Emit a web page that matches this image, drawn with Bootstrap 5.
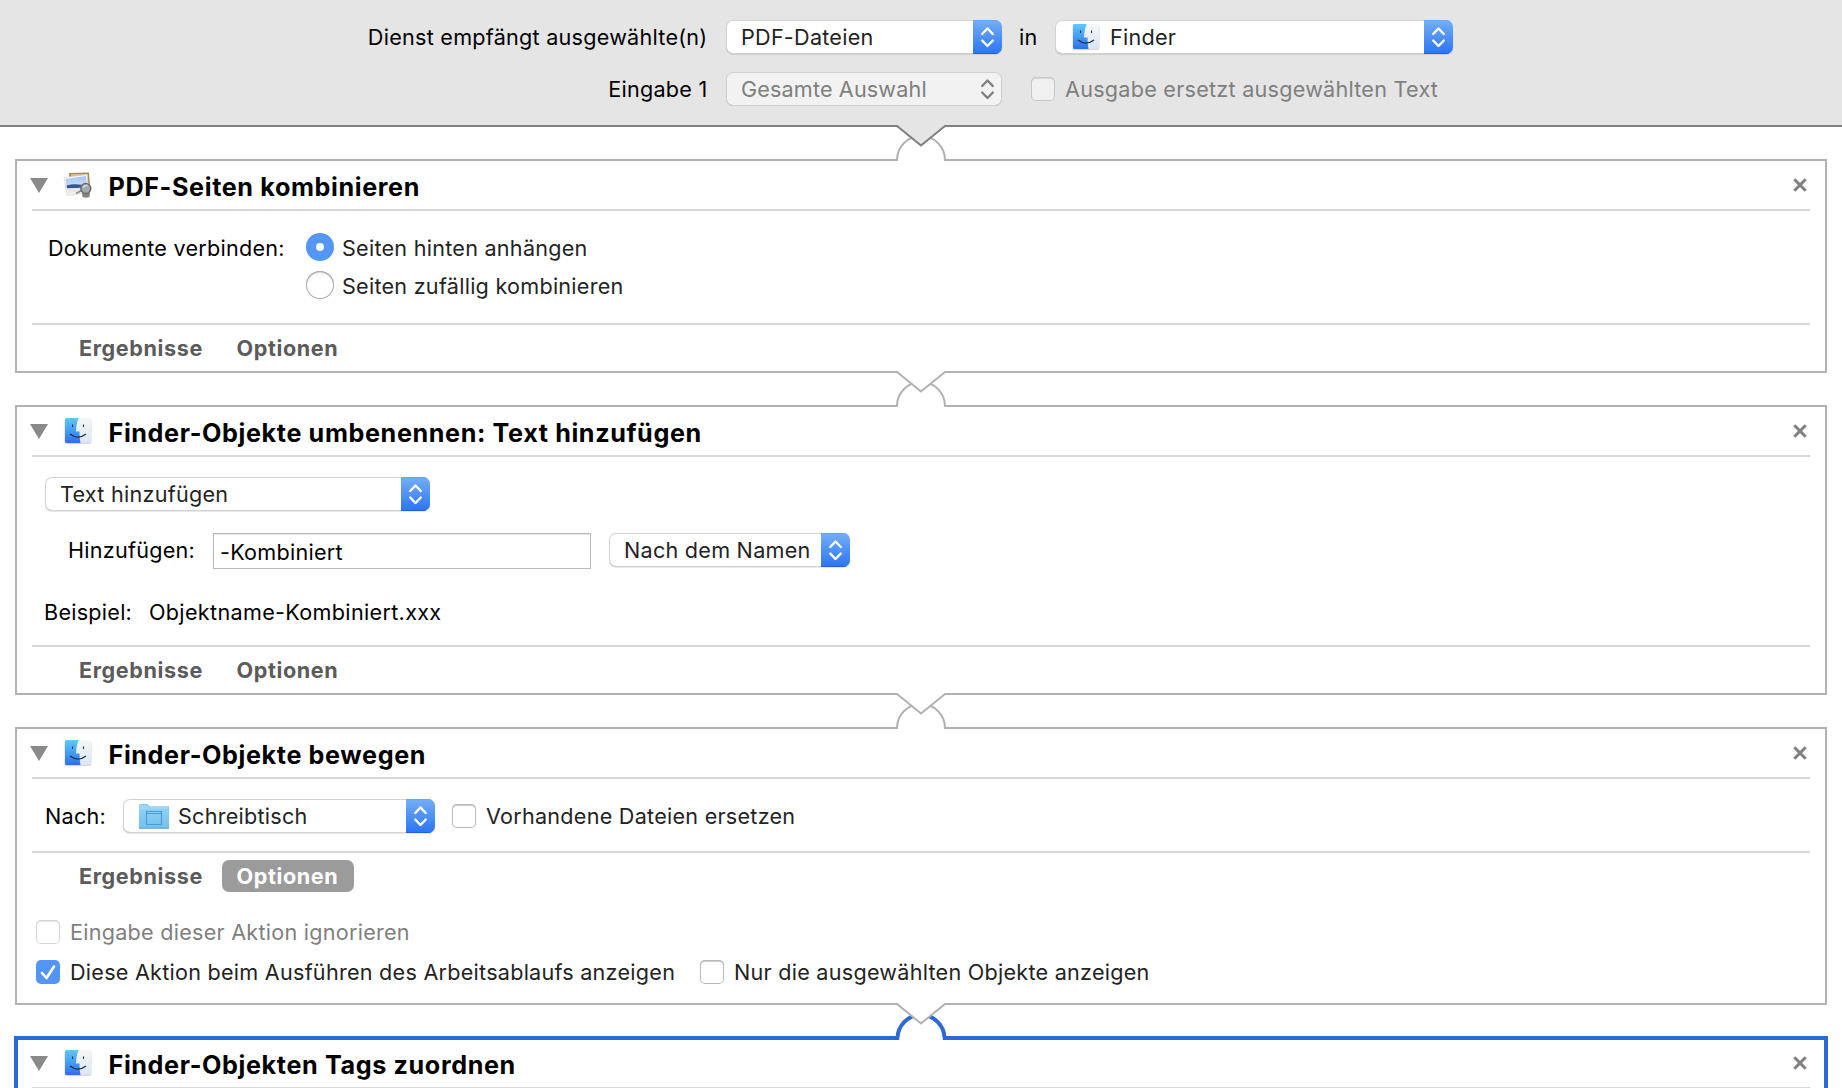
<!DOCTYPE html>
<html lang="de">
<head>
<meta charset="utf-8">
<title>Automator</title>
<link href="https://cdn.jsdelivr.net/npm/bootstrap@5.3.0/dist/css/bootstrap.min.css" rel="stylesheet">
<style>
body{font-family:Inter,"Noto Sans",sans-serif;font-size:21.6px;letter-spacing:.25px;line-height:26px;color:#000;background:#fff;height:1088px;overflow:hidden}
.t{white-space:nowrap;flex:none}
.svc{background:#e5e5e5;height:127px;border-bottom:2px solid #7f7f7f;padding-top:20px}
.svc-row{height:34px;margin-bottom:18px}
.svc-label{width:707.500px;margin-right:18.500px;text-align:right}
.pop{height:34px;flex:none;background:#fff;border-radius:7px;box-shadow:inset 0 0 0 1px #d2d2d2,inset 0 -1px 0 #b4b4b4,0 1px 1px rgba(0,0,0,.1);color:#232323;overflow:hidden;padding-left:15px}
.pop svg.pic{margin-left:1px}
.pop .cap{width:29px;height:34px;background:linear-gradient(#74aff6,#2b74f5);box-shadow:inset 0 -1px 0 #1b62e6,inset 0 1px 0 #6aa5f0}
.pop.off{background:#f2f2f2;color:#7f7f7f;letter-spacing:.15px;box-shadow:inset 0 0 0 1px #d0d0d0,inset 0 -1px 0 #c2c2c2}
.pop.off .cap{background:none;box-shadow:none}
.tick{width:24px;height:24px;border-radius:5px;flex:none;background:#fff;box-shadow:inset 0 0 0 1px #b9b9b9,inset 0 2px 1px #c9c9c9;margin-right:10px}
.tick.dim{box-shadow:inset 0 0 0 1px #d4d4d4,inset 0 2px 1px #e4e4e4}
.svc .tick.dim{background:#f0f0f0;margin-left:29px;box-shadow:inset 0 0 0 1px #c6c6c6,inset 0 2px 1px #d8d8d8}
.tick.on{background:#5295f4;box-shadow:none}
.dot{width:28px;height:28px;border-radius:50%;flex:none;box-shadow:inset 0 0 0 1px #ababab,inset 0 2px 2px #cfcfcf;margin:-2px 8px 0 0}
.dot.on{background:#5496f5;box-shadow:none}
.dot.on i{width:8px;height:8px;border-radius:50%;background:#fff;display:block}
.joint{height:32px;position:relative;z-index:2;display:flow-root}
.joint svg{display:block;margin:-2px auto 0}
.act{margin:0 15px;border:2px solid #b2b2b2}
.act.sel{height:51px;border-color:#2b6ad4;border-bottom:0;box-shadow:0 0 0 1px #2b6ad4,inset 0 1px 0 #2b6ad4,inset 1px 0 0 #2b6ad4,inset -1px 0 0 #2b6ad4}
.act-head{height:50px;margin:0 15px;border-bottom:2px solid #d8d8d8}
.act-head .tri{margin-left:-2px}
.act-head .ico{margin-left:15px;width:30px}
.act-title{font-size:25.2px;letter-spacing:.61px;font-weight:700;margin-left:15.500px;padding-top:3px}
.act-head .cls{margin:0 2px 0 auto}
.act-foot{margin:0 15px;border-top:2px solid #d8d8d8;padding-left:32px;font-weight:700;letter-spacing:.6px;color:#5b5b5b}
.foot-row{height:46px}
.tab{height:32px;padding:0 0 0 14.500px;border-radius:7px;width:132px}
.tab.first{width:158px;padding-left:15px}
.tab.on{background:#9b9b9b;color:#fff}
.field{width:378px;height:36px;border:1px solid #b9b9b9;box-shadow:inset 0 1px 0 #e8e8e8;border-radius:0;padding:1px 0 0 6px;font-size:inherit;letter-spacing:inherit;color:#000;flex:none}
.dimtext{color:#7f7f7f}.ctl{color:#232323}
.b1{height:112px;padding:18px 0 0 31px}.b1 .r{height:38px}
.b2{height:188px;padding:20px 0 0 28px}
.b3{height:72px;padding:2px 0 0 28px}
.opts{padding:21px 0 0 19px;height:104px}
.opts .r{height:24px;margin-bottom:16px}
</style>
<script src="https://cdn.jsdelivr.net/npm/bootstrap@5.3.0/dist/js/bootstrap.bundle.min.js"></script>
</head>
<body>
<svg width="0" height="0" class="position-absolute">
<defs>
<linearGradient id="gb" x1="0" y1="0" x2="0" y2="1"><stop offset="0" stop-color="#5ccaf8"/><stop offset="1" stop-color="#2f6fea"/></linearGradient>
<linearGradient id="gw" x1="0" y1="0" x2="0" y2="1"><stop offset="0" stop-color="#f6f7f8"/><stop offset="1" stop-color="#dbe5f2"/></linearGradient>
<linearGradient id="gf" x1="0" y1="0" x2="0" y2="1"><stop offset="0" stop-color="#8dd0f5"/><stop offset="1" stop-color="#74c0ee"/></linearGradient>
<linearGradient id="gs" x1="0" y1="0" x2="0" y2="1"><stop offset="0" stop-color="#a9c4f3"/><stop offset="1" stop-color="#c9dcfa"/></linearGradient>
<symbol id="finder" viewBox="0 0 30 28">
<rect x="1.500" y="2" width="27" height="25" rx="2" fill="#000" opacity=".16"/>
<rect x="2" y="1" width="26" height="25" rx="1.500" fill="url(#gw)"/>
<path d="M3.500 1H15.600C14 5 13.200 9 13 14.600H16.600C16.500 18 16.700 22 17.500 26H3.500Q2 26 2 24.500V2.500Q2 1 3.500 1Z" fill="url(#gb)"/>
<path d="M9.500 7.500V10M20.500 7.500V10" stroke="#1d2c44" stroke-width="1.100"/>
<path d="M7 17Q15 23.200 23 17" fill="none" stroke="#1d2c44" stroke-width="1.200"/>
</symbol>
<symbol id="caps" viewBox="0 0 29 34"><path d="M9.200 14 14.500 8.500 19.800 14M9.200 20.500 14.500 26 19.800 20.500" fill="none" stroke="currentColor" stroke-width="2.400" stroke-linecap="round" stroke-linejoin="round"/></symbol>
<symbol id="tri" viewBox="0 0 18 15"><path d="M0 0H18L9 15Z" fill="#8a8a8a"/></symbol>
<symbol id="cls" viewBox="0 0 16 16"><path d="M2.300 2.300 13.700 13.700M13.700 2.300 2.300 13.700" stroke="#7f7f7f" stroke-width="3"/></symbol>
<symbol id="joint" viewBox="0 0 56 36">
<path d="M4 36V35A24 24 0 0 1 52 35V36" fill="#fff" stroke="currentColor" stroke-width="2"/>
<path d="M4 0H52V1L28 20.500 4 1Z" fill="#fff"/>
<path d="M3 1H4L28 20.500 52 1H53" fill="none" stroke="#b2b2b2" stroke-width="2"/>
</symbol>
</defs></svg>

<header class="svc">
 <div class="svc-row d-flex align-items-center">
  <span class="t svc-label">Dienst empfängt ausgewählte(n)</span>
  <div class="pop d-flex align-items-center" style="width:276px"><span class="t me-auto">PDF-Dateien</span><svg class="cap text-white"><use href="#caps"/></svg></div>
  <span class="t" style="width:53px;padding-left:17px">in</span>
  <div class="pop d-flex align-items-center" style="width:398px"><svg class="pic" width="30" height="28"><use href="#finder"/></svg><span class="t me-auto" style="margin-left:9px">Finder</span><svg class="cap text-white"><use href="#caps"/></svg></div>
 </div>
 <div class="svc-row d-flex align-items-center">
  <span class="t svc-label">Eingabe 1</span>
  <div class="pop off d-flex align-items-center" style="width:276px"><span class="t me-auto">Gesamte Auswahl</span><svg class="cap"><use href="#caps"/></svg></div>
  <span class="tick dim"></span><span class="t dimtext">Ausgabe ersetzt ausgewählten Text</span>
 </div>
</header>
<div class="joint"><svg width="56" height="36" viewBox="0 0 56 36">
<path d="M4 36V35A24 24 0 0 1 52 35V36" fill="#fff" stroke="#b2b2b2" stroke-width="2"/>
<path d="M4 0H52V1L28 20.500 4 1Z" fill="#e5e5e5"/><path d="M3 1H4L28 20.500 52 1H53" fill="none" stroke="#7f7f7f" stroke-width="2"/></svg></div>

<section class="act">
 <div class="act-head d-flex align-items-center"><svg class="tri" width="18" height="15"><use href="#tri"/></svg>
  <svg class="ico" width="30" height="28" viewBox="0 0 30 28"><path d="M6 2 26 1.500 27 17 7 18Z" fill="#a88758"/><path d="M8 3 25 3 25 8 8 8Z" fill="#d3bb90"/><path d="M1 6.500 24 3.500 26 21.500 4 24.500Z" fill="#f5f5f2" stroke="#d0d0cc" stroke-width=".6"/><path d="M2.500 8 23 5 24 14.500 3.800 16Z" fill="url(#gs)"/><path d="M3.500 14.500Q14 11.500 24 15.500V16.500L4 17.500Z" fill="#35588f"/><path d="M4 17.500 24.500 16.500 24.500 20 4.500 22.500Z" fill="#e9e8e2"/><path d="M13 22.500 18.500 19.500" stroke="#8b8b85" stroke-width="1.600"/><path d="M19 22H27L26.500 26Q23 27.500 19.500 26Z" fill="#88847c"/><circle cx="22.800" cy="17.500" r="5" fill="#a3a9ae" stroke="#666b6f" stroke-width="1.400"/><path d="M20 16.500Q21.500 14 24.500 14.500" stroke="#dfe4e7" stroke-width="1.400" fill="none"/></svg>
  <span class="t act-title">PDF-Seiten kombinieren</span><svg class="cls" width="16" height="16"><use href="#cls"/></svg></div>
 <div class="b1 d-flex">
  <div class="t" style="width:258px;line-height:38px">Dokumente verbinden:</div>
  <div class="ctl">
   <div class="r d-flex align-items-center"><span class="dot on d-flex align-items-center justify-content-center"><i></i></span><span class="t">Seiten hinten anhängen</span></div>
   <div class="r d-flex align-items-center"><span class="dot"></span><span class="t">Seiten zufällig kombinieren</span></div>
  </div>
 </div>
 <div class="act-foot"><div class="foot-row d-flex align-items-center"><span class="tab first t d-flex align-items-center">Ergebnisse</span><span class="tab t d-flex align-items-center">Optionen</span></div></div>
</section>
<div class="joint" style="color:#b2b2b2"><svg width="56" height="36"><use href="#joint"/></svg></div>

<section class="act">
 <div class="act-head d-flex align-items-center"><svg class="tri" width="18" height="15"><use href="#tri"/></svg><svg class="ico" width="30" height="28"><use href="#finder"/></svg><span class="t act-title">Finder-Objekte umbenennen: Text hinzufügen</span><svg class="cls" width="16" height="16"><use href="#cls"/></svg></div>
 <div class="b2">
  <div class="pop d-flex align-items-center" style="width:385px"><span class="t me-auto">Text hinzufügen</span><svg class="cap text-white"><use href="#caps"/></svg></div>
  <div class="d-flex align-items-start" style="margin-top:22px"><span class="t" style="width:168px;padding-left:23px;line-height:34px">Hinzufügen:</span><input class="form-control field" value="-Kombiniert">
   <div class="pop d-flex align-items-center" style="width:241px;margin-left:18px"><span class="t me-auto">Nach dem Namen</span><svg class="cap text-white"><use href="#caps"/></svg></div></div>
  <div class="d-flex" style="margin:30px 0 0 -1px"><span class="t" style="width:105px">Beispiel:</span><span class="t" style="letter-spacing:.32px">Objektname-Kombiniert.xxx</span></div>
 </div>
 <div class="act-foot"><div class="foot-row d-flex align-items-center"><span class="tab first t d-flex align-items-center">Ergebnisse</span><span class="tab t d-flex align-items-center">Optionen</span></div></div>
</section>
<div class="joint" style="color:#b2b2b2"><svg width="56" height="36"><use href="#joint"/></svg></div>

<section class="act">
 <div class="act-head d-flex align-items-center"><svg class="tri" width="18" height="15"><use href="#tri"/></svg><svg class="ico" width="30" height="28"><use href="#finder"/></svg><span class="t act-title">Finder-Objekte bewegen</span><svg class="cls" width="16" height="16"><use href="#cls"/></svg></div>
 <div class="b3 d-flex align-items-center"><span class="t" style="width:78px">Nach:</span>
  <div class="pop d-flex align-items-center" style="width:312px;margin-right:17px"><svg class="pic" width="30" height="27" viewBox="0 0 30 27"><path d="M0 3Q0 1 2 1H8L11 3.500H30V25H0Z" fill="#6fb6e2"/><path d="M0 4Q0 1.500 2 1.500H8L11 4H29.500V6H0Z" fill="#9bd6f6"/><path d="M0 6H30V24.500H0Z" fill="url(#gf)"/><path d="M7.500 8.500H22.500V21.500H7.500ZM7.500 10.500H22.500" fill="none" stroke="#4d9cce" stroke-width="1.200"/><path d="M0 25.300H30" stroke="#5aa5d4" stroke-width="1"/></svg><span class="t me-auto" style="margin-left:9px">Schreibtisch</span><svg class="cap text-white"><use href="#caps"/></svg></div>
  <span class="tick"></span><span class="t ctl">Vorhandene Dateien ersetzen</span></div>
 <div class="act-foot"><div class="foot-row d-flex align-items-center"><span class="tab first t d-flex align-items-center">Ergebnisse</span><span class="tab on t d-flex align-items-center">Optionen</span></div></div>
 <div class="opts">
  <div class="r d-flex align-items-center"><span class="tick dim"></span><span class="t dimtext">Eingabe dieser Aktion ignorieren</span></div>
  <div class="r d-flex align-items-center ctl"><span class="tick on"><svg class="d-block" width="24" height="24"><path d="M6 13 10.500 18 18 6.500" fill="none" stroke="#fff" stroke-width="2.600" stroke-linecap="round" stroke-linejoin="round"/></svg></span><span class="t" style="width:630px">Diese Aktion beim Ausführen des Arbeitsablaufs anzeigen</span><span class="tick"></span><span class="t">Nur die ausgewählten Objekte anzeigen</span></div>
 </div>
</section>
<div class="joint"><svg width="56" height="37" viewBox="0 0 56 37"><path d="M4.500 37V35.500A23.500 23.500 0 0 1 51.500 35.500V37" fill="#fff" stroke="#2b6ad4" stroke-width="4"/><path d="M6.500 34H49.500V37H6.500Z" fill="#fff"/><path d="M4 0H52V1L28 20.500 4 1Z" fill="#fff"/><path d="M3 1H4L28 20.500 52 1H53" fill="none" stroke="#b2b2b2" stroke-width="2"/></svg></div>
<section class="act sel">
 <div class="act-head d-flex align-items-center"><svg class="tri" width="18" height="15"><use href="#tri"/></svg><svg class="ico" width="30" height="28"><use href="#finder"/></svg><span class="t act-title">Finder-Objekten Tags zuordnen</span><svg class="cls" width="16" height="16"><use href="#cls"/></svg></div>
</section>
</body>
</html>
